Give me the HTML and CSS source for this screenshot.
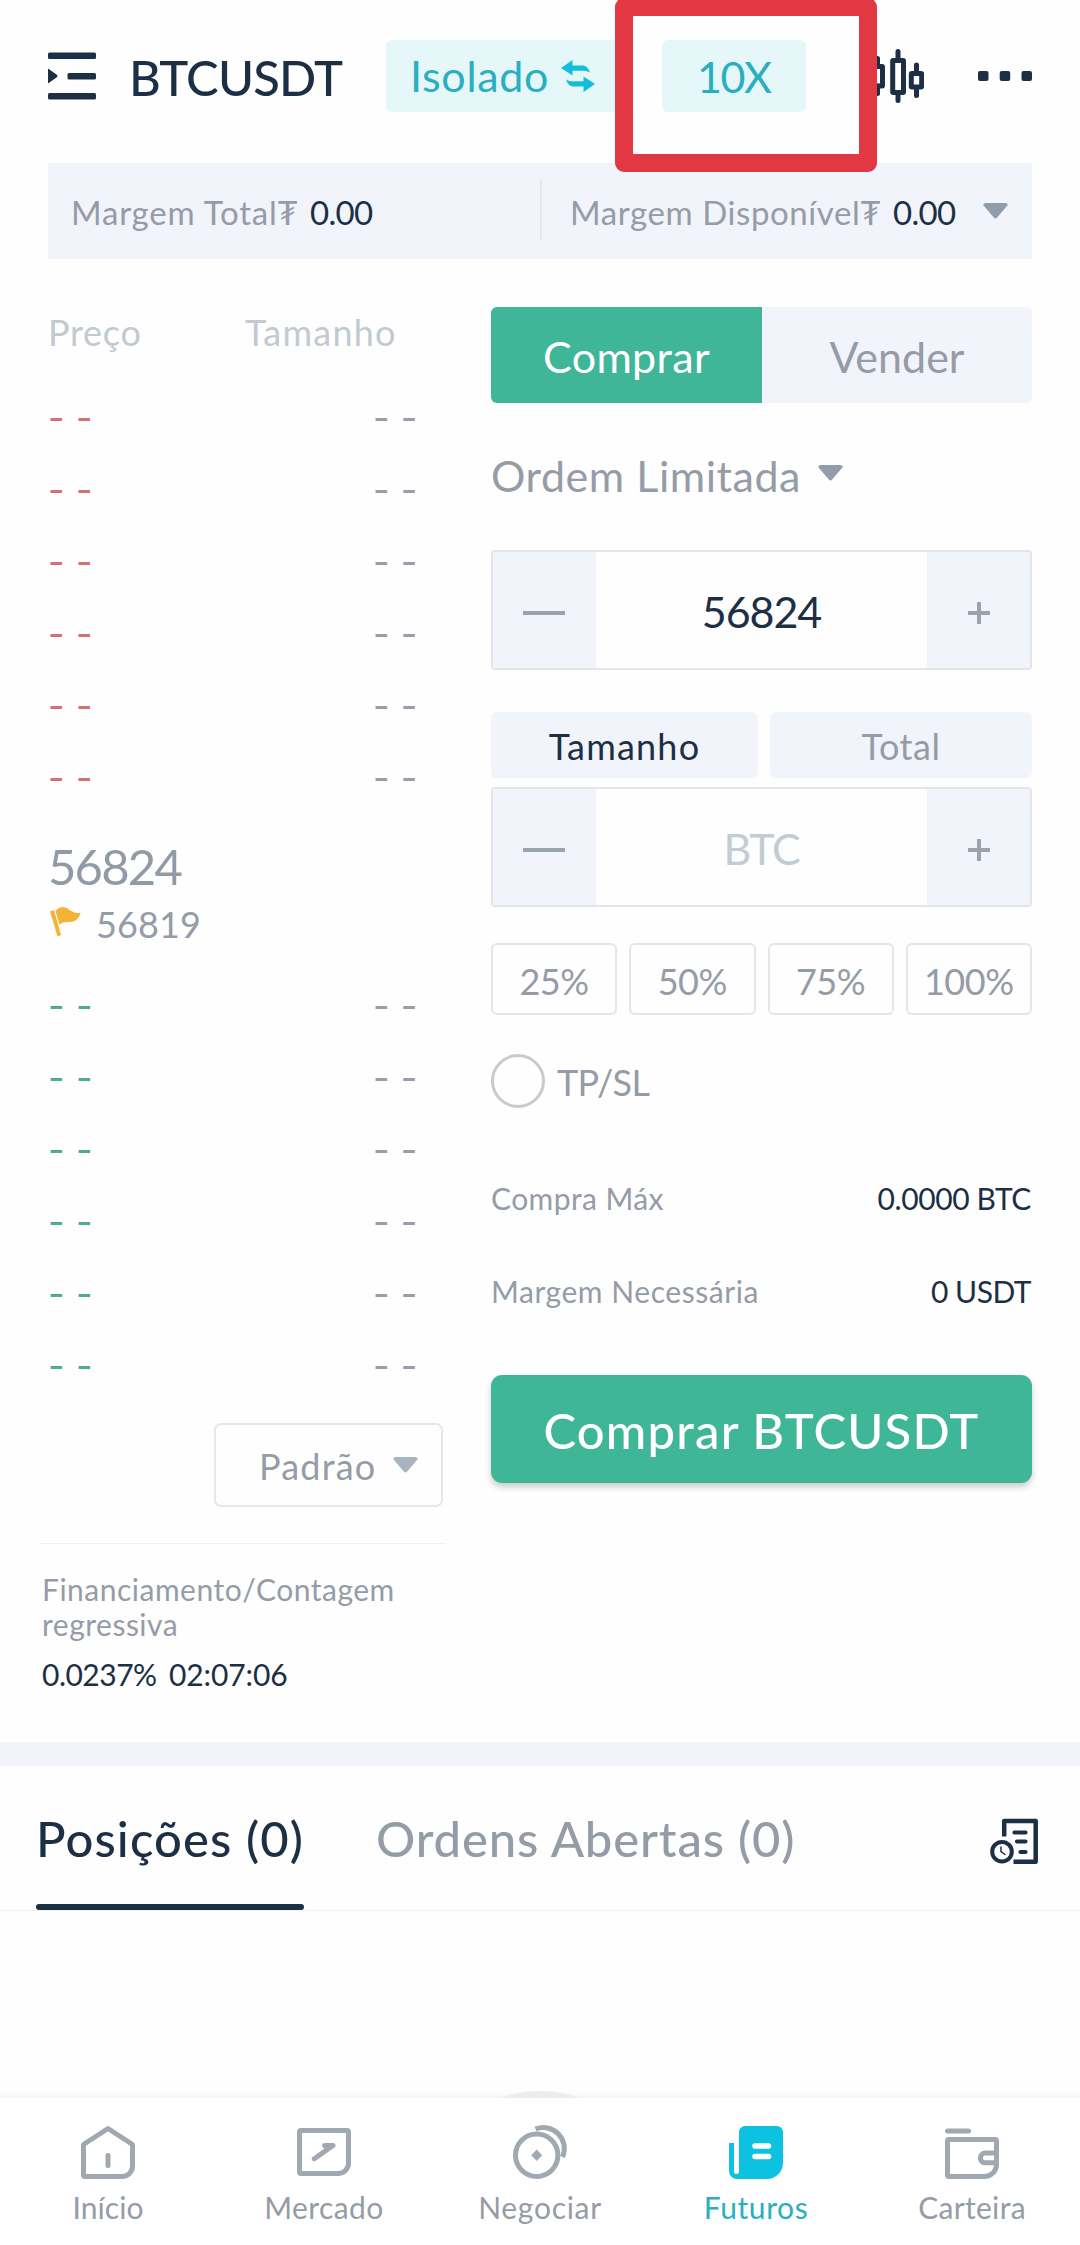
FILE: index.html
```html
<!DOCTYPE html>
<html lang="pt">
<head>
<meta charset="utf-8">
<title>BTCUSDT Futuros</title>
<link rel="stylesheet" href="styles.css">
</head>
<body>
<div class="app">
  <header class="top">
    <svg class="ic-menu" width="48" height="72" viewBox="0 0 48 72"><g fill="#1c2f45"><rect y="12.5" width="48" height="6.5" rx="1.5"/><rect x="19.5" y="33" width="28.5" height="6.5" rx="1.5"/><rect y="53" width="48" height="6.5" rx="1.5"/><path d="M0 28.5 8.500 34.500Q10.500 36 8.500 37.500L0 43.500z"/></g></svg>
    <h1 class="pair">BTCUSDT</h1>
    <div class="pill pill-mode"><span>Isolado</span>
      <svg width="34" height="32" viewBox="0 0 34 32" fill="#12bfdb"><path d="M0 8 11.500 0V5.500H21C25 5.500 27.500 8 29 12.500 26.500 11 24 10.700 21 10.700H11.500V15.500z"/><path d="M34 24 22.500 32V26.500H13C9 26.500 6.500 24 5 19.500 7.500 21 10 21.300 13 21.300H22.500V16.500z"/></svg>
    </div>
    <div class="pill pill-lev">10X</div>
    <svg class="ic-candles" width="56" height="72" viewBox="0 0 56 72"><g fill="none" stroke="#1c2f45" stroke-width="5"><path d="M9.500 18.500V26M9.500 46V53.500M30 11.500V20M30 53V60.500M48.500 25V33M48.500 48V55.500" stroke-linecap="round"/><rect x="4" y="26.500" width="10.500" height="19.500" rx=".5"/><rect x="24.700" y="20.500" width="10.800" height="32" rx=".5"/><rect x="43.300" y="33.500" width="10.400" height="13.500" rx=".5"/></g></svg>
    <svg class="ic-more" width="54" height="72" viewBox="0 0 54 72" fill="#1c2f45"><rect y="31" width="10.500" height="10" rx="2"/><rect x="21.700" y="31" width="10.500" height="10" rx="2"/><rect x="43.500" y="31" width="10.500" height="10" rx="2"/></svg>
    <div class="highlight"></div>
  </header>

  <section class="margins">
    <div class="margin margin-total"><span class="m-label">Margem Total</span><span class="m-cur">₮</span><span class="m-val">0.00</span></div>
    <div class="margin margin-free"><span class="m-label m-wide">Margem Disponível</span><span class="m-cur">₮</span><span class="m-val">0.00</span>
      <svg class="m-caret" width="25" height="16" viewBox="0 0 25 16"><path d="M2.500 0H22.500Q26 .8 24 3L14.200 14.500Q12.500 16.500 10.800 14.500L1 3Q-1 .8 2.500 0z" fill="#919dab"/></svg>
    </div>
  </section>

  <main class="trade">
    <section class="book">
      <div class="book-head"><span class="h-price">Preço</span><span class="h-size">Tamanho</span></div>
      <div class="rows asks">
        <div class="row"><span>- -</span><span>- -</span></div><div class="row"><span>- -</span><span>- -</span></div>
        <div class="row"><span>- -</span><span>- -</span></div><div class="row"><span>- -</span><span>- -</span></div>
        <div class="row"><span>- -</span><span>- -</span></div><div class="row"><span>- -</span><span>- -</span></div>
      </div>
      <div class="last">56824</div>
      <div class="mark">
        <svg width="31" height="30" viewBox="0 0 31 30" fill="#f3b336"><path d="M0 4.500 4 3 11 28 7.500 29.500z"/><path d="M5.500 4C10-1.500 15-.5 19 2.500 23 5.500 27 6.500 30.500 5.500 29 12 25 15 20 15 15 14.800 12 15 9.500 18z"/></svg>
        <span>56819</span>
      </div>
      <div class="rows bids">
        <div class="row"><span>- -</span><span>- -</span></div><div class="row"><span>- -</span><span>- -</span></div>
        <div class="row"><span>- -</span><span>- -</span></div><div class="row"><span>- -</span><span>- -</span></div>
        <div class="row"><span>- -</span><span>- -</span></div><div class="row"><span>- -</span><span>- -</span></div>
      </div>
      <div class="depth"><span>Padrão</span>
        <svg width="25" height="16" viewBox="0 0 25 16"><path d="M2.500 0H22.500Q26 .8 24 3L14.200 14.500Q12.500 16.500 10.800 14.500L1 3Q-1 .8 2.500 0z" fill="#a9b4bf"/></svg>
      </div>
      <div class="funding">
        <p class="f-label">Financiamento/Contagem regressiva</p>
        <p class="f-value"><span class="f-rate">0.0237%</span><span class="f-time">02:07:06</span></p>
      </div>
    </section>

    <section class="ticket">
      <div class="side"><div class="side-buy">Comprar</div><div class="side-sell">Vender</div></div>
      <div class="type"><span>Ordem Limitada</span>
        <svg width="25" height="16" viewBox="0 0 25 16"><path d="M2.500 0H22.500Q26 .8 24 3L14.200 14.500Q12.500 16.500 10.800 14.500L1 3Q-1 .8 2.500 0z" fill="#919dab"/></svg>
      </div>
      <div class="stepper">
        <div class="step"><i class="minus"></i></div><div class="amount">56824</div><div class="step"><svg width="22" height="22" viewBox="0 0 22 22"><path d="M11 0V22M0 11H22" stroke="#9aa2ac" stroke-width="4"/></svg></div>
      </div>
      <div class="units"><div class="unit unit-on">Tamanho</div><div class="unit unit-total">Total</div></div>
      <div class="stepper">
        <div class="step"><i class="minus"></i></div><div class="amount hint">BTC</div><div class="step"><svg width="22" height="22" viewBox="0 0 22 22"><path d="M11 0V22M0 11H22" stroke="#9aa2ac" stroke-width="4"/></svg></div>
      </div>
      <div class="pcts"><div class="pct">25%</div><div class="pct">50%</div><div class="pct">75%</div><div class="pct">100%</div></div>
      <div class="tpsl"><i class="radio"></i><span>TP/SL</span></div>
      <div class="info info-max"><span>Compra Máx</span><b>0.0000 BTC</b></div>
      <div class="info info-need"><span>Margem Necessária</span><b>0 USDT</b></div>
      <div class="submit">Comprar BTCUSDT</div>
    </section>
  </main>

  <div class="band"></div>
  <nav class="tabs">
    <div class="tab tab-on">Posições (0)</div>
    <div class="tab tab-orders">Ordens Abertas (0)</div>
    <svg class="ic-history" width="52" height="50" viewBox="0 0 52 50" fill="none" stroke="#1c2f45"><path d="M16.200 20.500V5H47.700V45.800H25.500" stroke-width="4.500" stroke-linejoin="round"/><path d="M26.500 16.500H37.500M29 25.500H37.500M32.500 36H37.500" stroke-width="4.200" stroke-linecap="round"/><circle cx="14" cy="35.700" r="9.800" stroke-width="4"/><path d="M13 31V35.500L17 38.500" stroke-width="1.500" stroke-linecap="round"/></svg>
  </nav>
  <section class="positions"><div class="empty"></div></section>

  <nav class="bar">
    <div class="item i-home"><svg width="56" height="56" viewBox="0 0 56 56"><g fill="none" stroke="#a0a8b1" stroke-width="5" stroke-linejoin="round" stroke-linecap="round"><path d="M28 4.500 52.500 20.500V42A10.500 10.500 0 0 1 42 52.500H5Q3.500 52.500 3.500 51V20.500z"/><path d="M28 31.500V41.500"/></g></svg><span>Início</span></div>
    <div class="item i-market"><svg width="56" height="56" viewBox="0 0 56 56"><g fill="none" stroke="#a0a8b1" stroke-width="5" stroke-linejoin="round" stroke-linecap="round"><path d="M5 6.500H51Q52.500 6.500 52.500 8V39A10.500 10.500 0 0 1 42 49.500H5Q3.500 49.500 3.500 48V8Q3.500 6.500 5 6.500z"/><path d="M18.300 34.700 37 21.500H28.500L32 24"/></g></svg><span>Mercado</span></div>
    <div class="item i-trade"><svg width="56" height="56" viewBox="0 0 56 56"><g fill="none" stroke="#a0a8b1" stroke-width="5"><circle cx="24.700" cy="31.300" r="21.200"/><path d="M23.500 5A21 21 0 0 1 50.500 33"/></g><path d="M24.700 25.500 30.200 31.300 24.700 37.100 19.200 31.300z" fill="#a0a8b1"/></svg><span>Negociar</span></div>
    <div class="item i-futures"><svg width="56" height="56" viewBox="0 0 56 56"><path d="M17 2H49A6 6 0 0 1 55 8V39A16 16 0 0 1 39 55H9A8 8 0 0 1 1 47V19H6V47.500A2.500 2.500 0 0 0 11 47.500V8A6 6 0 0 1 17 2z" fill="#0cc2e0"/><path d="M27 22H40.500M27 32.500H40.500" stroke="#fff" stroke-width="5.500" stroke-linecap="round"/></svg><span>Futuros</span></div>
    <div class="item i-wallet"><svg width="56" height="56" viewBox="0 0 56 56"><g fill="none" stroke="#a0a8b1" stroke-width="5" stroke-linejoin="round" stroke-linecap="round"><path d="M3.500 7H24.500"/><path d="M5 15.500H51Q52.500 15.500 52.500 17V40.500A12 12 0 0 1 40.500 52.500H5Q3.500 52.500 3.500 51V17Q3.500 15.500 5 15.500z"/><path d="M52 29H41.300A4.900 4.900 0 0 0 41.300 38.800H52" stroke-linecap="butt"/></g></svg><span>Carteira</span></div>
  </nav>
</div>
</body>
</html>
```
FILE: styles.css
```css
* { box-sizing: border-box; }
body { margin: 0; background: #fefefe; }
h1, p { margin: 0; font-weight: 400; }
svg { display: block; flex: none; }

.app {
  width: 1080px; height: 2245px; overflow: hidden;
  display: flex; flex-direction: column;
  font-family: Lato, "Noto Sans", sans-serif;
  color: #1c2f45;
}

/* Header */
.top { position: relative; display: flex; height: 163px; padding: 40px 48px 0; flex: none; }
.pair { flex: none; width: 290px; padding-left: 33px; font-size: 49px; font-weight: 500; line-height: 74px; letter-spacing: -.83px; }
.pill { flex: none; height: 72px; border-radius: 6px; background: #e6f7fa; color: #29afc0; font-size: 43px; line-height: 74px; }
.pill-mode { display: flex; gap: 12px; align-items: center; width: 240px; padding-left: 24px; letter-spacing: .67px; }
.pill-lev { width: 144px; margin-left: 36px; padding-left: 35px; letter-spacing: -1.5px; }
.ic-candles { margin-left: 62px; }
.ic-more { margin-left: auto; }
.highlight { position: absolute; left: 615px; top: -2px; width: 262px; height: 174px; border: 18px solid #e23844; border-radius: 9px; z-index: 2; }

/* Margin summary */
.margins { display: flex; flex: none; height: 96px; margin: 0 48px; background: #f1f4fa; font-size: 33px; line-height: 98px; }
.margin { display: flex; width: 492px; }
.margin-total { padding-left: 23px; }
.margin-free { padding: 0 24px 0 30px; background: linear-gradient(#e4e8ee, #e4e8ee) 0 17px / 2px 60px no-repeat; }
.m-label { width: 206px; color: #959ca7; letter-spacing: .8px; white-space: nowrap; }
.m-wide { width: 290px; letter-spacing: .59px; }
.m-cur { width: 33px; color: #959ca7; }
.m-val { letter-spacing: -.69px; }
.m-caret { margin: 40px 0 0 auto; }

/* Trade area */
.trade { display: flex; justify-content: space-between; flex: none; height: 1483px; padding: 48px 48px 0 40px; }
.book { display: flex; flex-direction: column; width: 405px; }
.book-head { display: flex; height: 75px; padding-left: 8px; font-size: 36px; line-height: 51px; color: #c3c9d2; }
.h-price { width: 197px; letter-spacing: .74px; }
.h-size { letter-spacing: 1.21px; }
.row { display: flex; justify-content: space-between; padding: 0 27px 0 8px; height: 72px; font: 36px/72px Inter, sans-serif; letter-spacing: .6px; color: #979ea8; }
.asks .row span:first-child { color: #cf7378; }
.bids .row span:first-child { color: #4fab93; }
.last { padding-left: 8px; margin-top: 22px; font-size: 49px; line-height: 60px; letter-spacing: -1.8px; color: #919ba7; }
.mark { display: flex; gap: 15px; padding: 0 0 0 10px; height: 74px; font-size: 36px; line-height: 56px; color: #959ca7; letter-spacing: .12px; }
.mark svg { margin-top: 11px; }
.depth { display: flex; gap: 17px; width: 229px; height: 84px; margin: 21px 2px 36px auto; padding-left: 43px; border: 2px solid #e6e7e9; border-radius: 7px; font-size: 36px; line-height: 83px; letter-spacing: 1.2px; color: #959ca7; }
.depth svg { margin-top: 32px; }
.funding { padding: 28px 0 0 2px; border-top: 1px solid #f0f1f3; font-size: 30px; }
.f-label { line-height: 35px; letter-spacing: .5px; color: #959ca7; }
.f-value { display: flex; margin-top: 12px; line-height: 40px; }
.f-rate { width: 127px; letter-spacing: -.51px; }
.f-time { letter-spacing: -.1px; }

.ticket { width: 541px; }
.side { display: flex; height: 96px; border-radius: 6px; overflow: hidden; background: #f1f4fa; font-size: 43px; line-height: 99px; text-align: center; color: #959ca7; }
.side-buy { width: 271px; background: #3fb698; color: #fff; letter-spacing: .36px; }
.side-sell { width: 270px; }
.type { display: flex; gap: 17px; height: 147px; padding-top: 43px; font-size: 43px; line-height: 60px; color: #959ca7; letter-spacing: .55px; }
.type svg { margin-top: 19px; }
.stepper { display: flex; height: 120px; border: 2px solid #e4e5e8; border-radius: 4px; }
.step { display: flex; align-items: center; justify-content: center; width: 103px; height: 116px; padding-top: 5px; background: #f1f4fa; }
.step:first-child { padding-right: 2px; }
.minus { width: 42px; height: 4px; background: #9aa2ac; }
.amount { flex: 1; font-size: 43px; line-height: 119px; text-align: center; letter-spacing: -1.07px; }
.hint { color: #c5cbd2; letter-spacing: -1.3px; }
.units { display: flex; gap: 12px; height: 117px; padding: 42px 0 9px; text-align: center; font-size: 36px; line-height: 69px; }
.unit { width: 262px; border-radius: 6px; background: #f1f4fa; color: #959ca7; letter-spacing: .56px; }
.unit-on { width: 267px; color: #1c2f45; letter-spacing: 1.21px; }
.pcts { display: flex; gap: 12px; margin-top: 36px; }
.pct { flex: 1; height: 72px; border: 2px solid #e4e5e8; border-radius: 6px; text-align: center; font-size: 36px; line-height: 72px; color: #959ca7; letter-spacing: -.38px; }
.tpsl { display: flex; gap: 12px; margin-top: 39px; font-size: 36px; line-height: 56px; color: #959ca7; letter-spacing: -.64px; }
.radio { width: 54px; height: 54px; border: 3px solid #c9cacc; border-radius: 50%; }
.info { display: flex; justify-content: space-between; font-size: 30px; line-height: 40px; color: #959ca7; letter-spacing: .41px; }
.info b { margin-right: 1px; font-weight: 400; color: #1c2f45; letter-spacing: -.4px; }
.info-max { margin-top: 68px; }
.info-need { margin-top: 53px; letter-spacing: .55px; }
.info-need b { letter-spacing: -.5px; }
.submit { height: 108px; margin-top: 64px; border-radius: 11px; background: #3fb698; box-shadow: 0 4px 6px rgba(0, 0, 0, .2); color: #fff; text-align: center; font-size: 49px; font-weight: 500; line-height: 110px; letter-spacing: 1.18px; }

/* Positions */
.band { flex: none; height: 24px; background: #f1f4f9; }
.tabs { display: flex; flex: none; height: 145px; padding: 0 40px 0 36px; border-bottom: 1px solid #f0f1f3; font-size: 49px; font-weight: 500; }
.tab { padding-top: 7px; line-height: 131px; white-space: nowrap; }
.tab-on { width: 268px; height: 144px; letter-spacing: 1.1px; }
.tab-on::after { content: ""; display: block; height: 6px; border-radius: 3px; background: #1c2f45; }
.tab-orders { margin-left: 72px; color: #959ca7; letter-spacing: .84px; }
.ic-history { margin: 50px 0 0 auto; }
.positions { flex: 1; overflow: hidden; padding-top: 180px; background: linear-gradient(rgba(0,0,0,0), rgba(0,0,0,.035)) bottom / 100% 7px no-repeat; }
.empty { width: 228px; height: 228px; margin: 0 auto; border-radius: 50%; background: #ececee; }

/* Bottom navigation */
.bar { display: grid; grid-template-columns: repeat(5, 1fr); flex: none; height: 147px; padding-top: 26px; background: #fff; }
.item { display: flex; flex-direction: column; align-items: center; gap: 10px; font-size: 30px; line-height: 35px; color: #959ca7; letter-spacing: .4px; }
.i-home { letter-spacing: .07px; }
.i-trade { letter-spacing: .7px; }
.i-futures { color: #2aafc1; letter-spacing: .61px; }
.i-wallet { letter-spacing: .32px; }
```
